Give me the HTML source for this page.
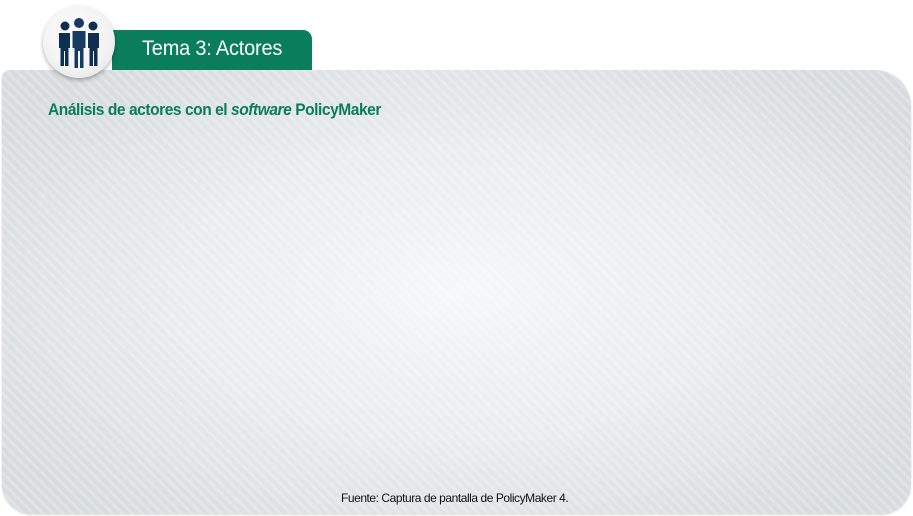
<!DOCTYPE html>
<html><head><meta charset="utf-8"><style>
body{margin:0;width:913px;height:516px;background:#fff;position:relative;overflow:hidden;font-family:"Liberation Sans",sans-serif}
.panel{position:absolute;left:2px;top:70px;width:909px;height:444px;border-radius:8px 36px 30px 30px;
background:repeating-linear-gradient(45deg,rgba(255,255,255,0.22) 0 3px,rgba(255,255,255,0) 3px 7px),radial-gradient(ellipse 60% 65% at 50% 50%,#f5f7f8 0%,#e8ebed 55%,#d6dbde 100%);
box-shadow:0 1px 2px rgba(0,0,0,0.15)}
.tab{position:absolute;left:112px;top:30px;width:200px;height:40px;background:#0a7d5c;border-radius:0 9px 0 0}
.tab span{position:absolute;left:30px;top:7px;color:#fff;font-size:21px;letter-spacing:-0.2px;transform:scaleX(0.95);transform-origin:left}
.circle{position:absolute;left:43px;top:6px;width:72px;height:72px;border-radius:50%;background:radial-gradient(circle at 45% 40%,#fff 0%,#f2f2f2 60%,#dcdcdc 100%);box-shadow:0 2px 4px rgba(0,0,0,0.3)}
.h{position:absolute;left:48px;top:100px;color:#0a7d5c;font-size:17px;font-weight:bold;letter-spacing:-0.5px;transform:scaleX(0.915);transform-origin:left}
.f{position:absolute;left:341px;top:491px;font-size:12px;color:#111;letter-spacing:-0.45px}
</style></head><body>
<div class="panel"></div>
<div class="tab"><span>Tema 3: Actores</span></div>
<div class="circle">
<svg width="72" height="72" viewBox="0 0 72 72">
<g fill="#0f2f52">
<circle cx="22" cy="20" r="4.5"/><path d="M16 27h11v15h-1.5v18h-3.5V45h-1v15h-3.5V42H16z"/>
<circle cx="50" cy="20" r="4.5"/><path d="M45 27h11v15h-1.5v18H51V45h-1v15h-3.5V42H45z"/>
</g>
<g fill="#153a63">
<circle cx="36" cy="17" r="5"/><path d="M29.5 25h13v17h-2v20h-3.5V45h-2v17H31.5V42h-2z"/>
</g>
</svg></div>
<div class="h">Análisis de actores con el <i>software</i> PolicyMaker</div>
<div class="f">Fuente: Captura de pantalla de PolicyMaker 4.</div>
</body></html>
